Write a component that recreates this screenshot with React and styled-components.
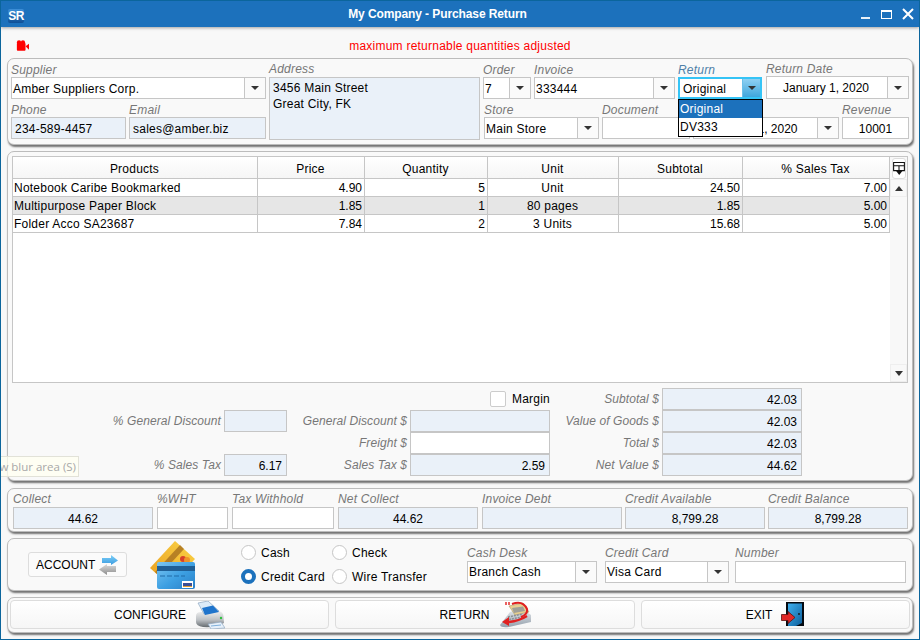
import React from "react";
import styled, { createGlobalStyle } from "styled-components";

const GlobalStyle = createGlobalStyle`
  html, body {
    margin: 0;
    padding: 0;
    background: #f8f8f8;
  }
  * {
    box-sizing: border-box;
  }
`;

const Window = styled.div`
  position: relative;
  width: 920px;
  height: 640px;
  overflow: hidden;
  display: flex;
  flex-direction: column;
  border: 1px solid #0b659c;
  background: #f8f8f8;
  font-family: "Liberation Sans", Arial, sans-serif;
  font-size: 12px;
  letter-spacing: 0.23px;
  color: #000;
`;

const TitleBar = styled.div`
  flex: none;
  height: 26px;
  display: flex;
  align-items: center;
  background: #1c71bc;
  box-shadow: 0 1px 3px rgba(0, 0, 0, 0.35);
  z-index: 1;
`;

const Logo = styled.div`
  flex: none;
  width: 16px;
  height: 14px;
  margin: 3px 6px 0 7px;
  border-radius: 2px;
  background: linear-gradient(#3d8fd8, #0f4f96);
  color: #fff;
  font-size: 12px;
  font-weight: bold;
  line-height: 14px;
  letter-spacing: -0.5px;
  text-align: center;
`;

const Title = styled.div`
  flex: 1;
  color: #fff;
  font-size: 12px;
  font-weight: bold;
  letter-spacing: -0.1px;
  text-align: center;
`;

const Controls = styled.div`
  flex: none;
  width: 74px;
  height: 26px;
  display: flex;
  align-items: flex-start;
  svg {
    display: block;
  }
`;

const MessageRow = styled.div`
  flex: none;
  height: 31px;
  position: relative;
  display: flex;
  align-items: center;
  justify-content: center;
  padding-top: 6px;
  color: #ff0000;
  font-size: 12px;
`;

const CameraSlot = styled.div`
  position: absolute;
  left: 15px;
  top: 13px;
  svg {
    display: block;
  }
`;

const Panels = styled.div`
  flex: 1;
  display: flex;
  flex-direction: column;
  padding: 0 6px;
`;

const Panel = styled.div`
  flex: none;
  height: ${(p) => p.$h}px;
  margin-bottom: ${(p) => p.$mb}px;
  border: 1px solid #bcbcbc;
  border-radius: 7px;
  background: #f9f9f9;
  box-shadow: 1px 2px 2px rgba(0, 0, 0, 0.55);
`;

const HeaderPanel = styled(Panel)`
  display: flex;
  gap: 3px;
  padding: 0 3px;
`;

const Column = styled.div`
  flex: none;
  width: ${(p) => p.$w}px;
  display: flex;
  flex-direction: column;
`;

const FormRow = styled.div`
  display: flex;
  gap: 3px;
  margin-left: ${(p) => p.$ml || 0}px;
`;

const Field = styled.div`
  flex: none;
  position: relative;
  width: ${(p) => p.$w}px;
  margin-left: ${(p) => p.$ml || 0}px;
  display: flex;
  flex-direction: column;
`;

const Label = styled.div`
  height: ${(p) => p.$h || 18}px;
  padding-top: ${(p) => p.$pt || 4}px;
  line-height: 14px;
  font-style: italic;
  letter-spacing: 0.2px;
  white-space: nowrap;
  color: ${(p) => (p.$active ? "#4e80a8" : "#777")};
`;

const Box = styled.div`
  height: 22px;
  display: flex;
  align-items: center;
  justify-content: ${(p) => (p.$center ? "center" : "flex-start")};
  padding: 1px 3px 0;
  border: 1px solid #c6c6c6;
  background: ${(p) => (p.$white ? "#fff" : "#eaf1f9")};
  letter-spacing: ${(p) => (p.$center ? 0 : "inherit")};
  white-space: nowrap;
`;

const AddressBox = styled.div`
  height: 63px;
  padding: 2px 3px;
  border: 1px solid #c6c6c6;
  background: #eaf1f9;
  line-height: 16px;
`;

const ComboBox = styled.div`
  height: ${(p) => (p.$tallBox ? 23 : 22)}px;
  display: flex;
  border: ${(p) => (p.$focus ? "2px solid #35c4f6" : "1px solid #c6c6c6")};
  background: #fff;
`;

const ComboText = styled.div`
  flex: 1;
  min-width: 0;
  display: flex;
  align-items: center;
  justify-content: ${(p) => (p.$center ? "center" : "flex-start")};
  padding: 1px ${(p) => (p.$center ? 3 : 0)}px 0 ${(p) => (p.$focus ? 3 : 1)}px;
  letter-spacing: ${(p) => (p.$center ? 0 : "inherit")};
  white-space: nowrap;
`;

const ComboButton = styled.div`
  flex: none;
  width: ${(p) => (p.$focus ? 18 : 21)}px;
  display: flex;
  align-items: center;
  justify-content: center;
  border-left: 1px solid ${(p) => (p.$focus ? "#6cc0ea" : "#c6c6c6")};
  background: ${(p) => (p.$focus ? "linear-gradient(#8fd0f2, #3fa6dc)" : "#fafafa")};
  &::after {
    content: "";
    border-left: 4px solid transparent;
    border-right: 4px solid transparent;
    border-top: 4px solid #333;
  }
`;

const Popup = styled.div`
  position: absolute;
  left: 0;
  top: 40px;
  width: 85px;
  height: 38px;
  z-index: 3;
  border: 1px solid #000;
  background: #fff;
`;

const PopupItem = styled.div`
  height: 18px;
  padding-left: 1px;
  line-height: 19px;
  background: ${(p) => (p.$selected ? "#1c71bc" : "#fff")};
  color: ${(p) => (p.$selected ? "#fff" : "#000")};
`;

const ItemsPanel = styled(Panel)`
  padding: 4px 4px 0;
`;

const TableBox = styled.div`
  width: 896px;
  height: 227px;
  display: flex;
  border: 1px solid #c6c6c6;
  background: #fff;
`;

const Table = styled.div`
  flex: none;
  width: 877px;
`;

const TableRow = styled.div`
  display: grid;
  grid-template-columns: 245px 107px 123px 131px 124px 147px;
  height: ${(p) => (p.$header ? 22 : 18)}px;
  background: ${(p) =>
    p.$header ? "linear-gradient(#fff, #f5f5f5)" : p.$shaded ? "#e6e6e6" : "#fff"};
`;

const Cell = styled.div`
  display: flex;
  align-items: center;
  justify-content: ${(p) =>
    p.$align === "right" ? "flex-end" : p.$align === "center" ? "center" : "flex-start"};
  padding: 0 2px 0 1px;
  border-right: 1px solid #c6c6c6;
  border-bottom: 1px solid #c6c6c6;
  letter-spacing: ${(p) => (p.$align === "right" ? 0 : "inherit")};
  white-space: nowrap;
`;

const HeaderCell = styled(Cell)`
  padding-top: 2px;
`;

const ScrollBar = styled.div`
  flex: 1;
  display: flex;
  flex-direction: column;
  background: #f8f8f8;
`;

const ScrollButton = styled.div`
  flex: none;
  height: ${(p) => p.$h}px;
  display: flex;
  align-items: center;
  justify-content: center;
  border: 1px solid #eee;
  background: #f8f8f8;
  &::after {
    content: "";
    display: block;
    border-left: 4px solid transparent;
    border-right: 4px solid transparent;
    border-${(p) => (p.$dir === "up" ? "bottom" : "top")}: 5px solid #333;
  }
`;

const ColumnsButton = styled.div`
  flex: none;
  height: 21px;
  margin: 1px 0 0 2px;
  width: 14px;
  display: flex;
  align-items: center;
  justify-content: center;
  border: 1px solid #ddd;
  border-radius: 3px;
  background: #fff;
`;

const ScrollTrack = styled.div`
  flex: 1;
`;

const Totals = styled.div`
  display: grid;
  grid-template-columns: 212px 63px 123px 140px 112px 140px;
  grid-auto-rows: 21px;
  row-gap: 1px;
  margin-top: 5px;
`;

const TotalLabel = styled.div`
  display: flex;
  align-items: center;
  justify-content: flex-end;
  padding: 1px 3px 0 0;
  font-style: italic;
  letter-spacing: 0.08px;
  color: #777;
  white-space: nowrap;
`;

const TotalValue = styled.div`
  display: flex;
  align-items: center;
  justify-content: flex-end;
  padding: 1px 4px 0 0;
  border: 1px solid #c6c6c6;
  height: 22px;
  letter-spacing: 0;
  background: ${(p) => (p.$white ? "#fff" : "#eaf1f9")};
`;

const Spacer = styled.div`
  grid-column: span 2;
`;

const MarginCell = styled.div`
  grid-column: span 2;
  display: flex;
  align-items: center;
  justify-content: flex-end;
  gap: 6px;
  padding-top: 1px;
`;

const CheckBox = styled.div`
  width: 16px;
  height: 16px;
  border: 1px solid #ccc;
  border-radius: 2px;
  background: #fff;
`;

const CollectPanel = styled(Panel)`
  display: flex;
  padding: 0 5px;
`;

const CollectField = styled(Field)`
  margin-right: ${(p) => p.$mr}px;
`;

const PaymentPanel = styled(Panel)`
  display: flex;
  align-items: center;
  padding-left: 20px;
`;

const AccountButton = styled.div`
  flex: none;
  width: 99px;
  height: 25px;
  display: flex;
  align-items: center;
  gap: 4px;
  padding-left: 7px;
  border: 1px solid #ddd;
  border-radius: 3px;
  background: #fbfbfb;
  letter-spacing: 0;
`;

const CardSlot = styled.div`
  flex: none;
  width: 45px;
  height: 48px;
  margin: 0 46px 0 23px;
  svg {
    display: block;
  }
`;

const RadioGrid = styled.div`
  flex: none;
  width: 226px;
  display: grid;
  grid-template-columns: 91px 1fr;
  grid-auto-rows: 24px;
`;

const RadioItem = styled.div`
  display: flex;
  align-items: center;
  gap: 5px;
  white-space: nowrap;
`;

const RadioDot = styled.div`
  flex: none;
  width: 15px;
  height: 15px;
  border-radius: 50%;
  border: ${(p) => (p.$on ? "4px solid #1c71bc" : "1px solid #c6c6c6")};
  background: #fff;
`;

const PaymentFields = styled.div`
  display: flex;
  margin-top: -4px;
`;

const PaymentField = styled(Field)`
  margin-right: ${(p) => p.$mr}px;
`;

const ButtonPanel = styled(Panel)`
  display: flex;
  gap: 6px;
  padding: 2px 0 0 2px;
`;

const ActionButton = styled.div`
  flex: none;
  width: ${(p) => p.$w}px;
  height: 29px;
  display: flex;
  align-items: center;
  justify-content: center;
  gap: 9px;
  border: 1px solid #ddd;
  border-radius: 4px;
  background: linear-gradient(#fff, #f6f6f6);
  letter-spacing: 0;
  svg {
    display: block;
  }
`;

const BlurTip = styled.div`
  position: absolute;
  left: -40px;
  top: 455px;
  width: 118px;
  height: 21px;
  padding-right: 2px;
  border: 1px solid #e2e2d8;
  background: rgba(255, 255, 240, 0.75);
  color: #a8a8a8;
  font-family: "Open Sans", sans-serif;
  font-size: 11.5px;
  letter-spacing: 0;
  line-height: 19px;
  text-align: right;
  white-space: nowrap;
  z-index: 4;
`;

const CameraIcon = () => (
  <svg width="13" height="11" viewBox="0 0 15 12">
    <circle cx="3.5" cy="2.5" r="2.5" fill="#f00" />
    <circle cx="8" cy="2.5" r="2.5" fill="#f00" />
    <rect x="1" y="3" width="10" height="9" rx="1" fill="#f00" />
    <path d="M11 7 L15 4 V11 Z" fill="#f00" />
  </svg>
);

const WindowIcons = () => (
  <svg width="74" height="26" viewBox="0 0 74 26">
    <rect x="16" y="16" width="9" height="2" fill="#fff" opacity="0.9" />
    <rect x="36.5" y="9.5" width="10" height="8" fill="none" stroke="#fff" strokeWidth="1" />
    <rect x="36" y="9" width="11" height="2" fill="#fff" />
    <path d="M58 8 L68 18 M68 8 L58 18" stroke="#fff" strokeWidth="2" />
  </svg>
);

const ColumnsIcon = () => (
  <svg width="12" height="14" viewBox="0 0 11 13">
    <path d="M0.5 0.5 H10.5 V8 H0.5 Z M0.5 3.5 H10.5 M5.5 3.5 V8" fill="#fff" stroke="#111" />
    <path d="M2.5 8 H9 L5.7 12 Z" fill="#111" />
  </svg>
);

const ArrowsIcon = () => (
  <svg width="20" height="20" viewBox="0 0 20 20">
    <defs>
      <linearGradient id="arrowBlue" x1="0" y1="0" x2="0" y2="1">
        <stop offset="0" stopColor="#7fd0f8" />
        <stop offset="1" stopColor="#3a9be0" />
      </linearGradient>
      <linearGradient id="arrowGrey" x1="0" y1="0" x2="0" y2="1">
        <stop offset="0" stopColor="#dcdcdc" />
        <stop offset="1" stopColor="#8c8c8c" />
      </linearGradient>
    </defs>
    <path d="M3 3 H12 V0 L19 5.5 L12 10 V8 H3 Z" fill="url(#arrowBlue)" />
    <path d="M17 11 H8 V9 L0 14.5 L8 20 V17 H17 Z" fill="url(#arrowGrey)" />
  </svg>
);

const CardsIcon = () => (
  <svg width="45" height="48" viewBox="0 0 45 48">
    <defs>
      <linearGradient id="cardGold" x1="0" y1="1" x2="1" y2="0">
        <stop offset="0" stopColor="#e89b1c" />
        <stop offset="1" stopColor="#fbd448" />
      </linearGradient>
      <linearGradient id="cardBlue" x1="0" y1="0" x2="1" y2="1">
        <stop offset="0" stopColor="#7cc6f2" />
        <stop offset="0.55" stopColor="#3c9fe2" />
        <stop offset="1" stopColor="#2a7fc6" />
      </linearGradient>
    </defs>
    <path d="M0 27 L25 0 L45 18 L20 45 Z" fill="url(#cardGold)" />
    <path d="M5 31 L30 4 L34 8 L9 35 Z" fill="#a8701f" opacity="0.8" />
    <circle cx="33" cy="18" r="3" fill="#d8402a" />
    <circle cx="37" cy="19" r="3" fill="#f0922a" />
    <rect x="7" y="21" width="38" height="27" rx="2" fill="url(#cardBlue)" />
    <rect x="7" y="25" width="38" height="5" fill="#1f5f96" />
    <path d="M10 35 H35" stroke="#1f6aa8" strokeDasharray="5 2" />
    <rect x="32" y="40" width="11" height="7" fill="#fff" />
    <rect x="33" y="42" width="9" height="3" fill="#3a4f96" />
    <rect x="33" y="45" width="9" height="1" fill="#e0a030" />
  </svg>
);

const PrinterIcon = () => (
  <svg width="30" height="28" viewBox="0 0 30 28">
    <defs>
      <linearGradient id="printerBody" x1="0" y1="0" x2="0" y2="1">
        <stop offset="0" stopColor="#f0f0f0" />
        <stop offset="0.55" stopColor="#bcc0c4" />
        <stop offset="1" stopColor="#666c70" />
      </linearGradient>
    </defs>
    <path d="M1 15 Q1 11 6 11 L24 10 Q28 11 28.5 15 L29 22 Q20 27 8 26 Q1 25 1 21 Z" fill="url(#printerBody)" />
    <path d="M3 2 L13 0 L24 10 L9 13 Z" fill="#dcebf8" stroke="#8fa8c0" strokeWidth="0.7" />
    <path d="M7 7 L18 4.5 L24 11 L10 14 Z" fill="#1f74cc" />
    <circle cx="26" cy="17" r="1.2" fill="#2fbf3f" />
    <path d="M13 23 L26 21 L30 27 L16 28 Z" fill="#e6f0fa" stroke="#8fa8c0" strokeWidth="0.7" />
    <path d="M16 25 L26 24" stroke="#7fb0dc" />
  </svg>
);

const RegisterIcon = () => (
  <svg width="32" height="29" viewBox="0 0 32 29">
    <defs>
      <linearGradient id="registerBody" x1="0" y1="0" x2="0" y2="1">
        <stop offset="0" stopColor="#eceff2" />
        <stop offset="1" stopColor="#94a0ac" />
      </linearGradient>
    </defs>
    <path d="M1 25 L11 12 L22 8 L32 15 L32 22 L10 27 Q2 28 1 25 Z" fill="url(#registerBody)" />
    <path d="M10 6 L24 3 L30 12 L16 15 Z" fill="#e8d090" stroke="#a89868" strokeWidth="0.6" />
    <path d="M13 8 L24 6.5 L26 11 L15 13 Z" fill="#a0a098" />
    <path d="M9 17 L24 14 M7 20 L23 17" stroke="#8a8f94" strokeWidth="1.5" strokeDasharray="2 1" />
    <path d="M7 2 V5 M10 2 V5" stroke="#e02020" strokeWidth="1.4" />
    <path d="M13 4 Q24 0 28 9 Q29 14 22 17" fill="none" stroke="#e02020" strokeWidth="2" />
    <path d="M28 16 Q20 21 10 22" fill="none" stroke="#e02020" strokeWidth="2.4" />
    <path d="M10 17 L3 22 L10 26 Z" fill="#e02020" />
  </svg>
);

const DoorIcon = () => (
  <svg width="24" height="25" viewBox="0 0 24 25">
    <defs>
      <linearGradient id="doorBlue" x1="0" y1="0" x2="1" y2="1">
        <stop offset="0" stopColor="#3fb0ee" />
        <stop offset="1" stopColor="#0e5f9c" />
      </linearGradient>
    </defs>
    <rect x="5" y="0" width="18" height="24" fill="#050a10" />
    <path d="M7 1.5 H21 V21 L15 24 H7 Z" fill="url(#doorBlue)" />
    <circle cx="18" cy="12" r="0.9" fill="#111" />
    <path d="M0.5 12.5 H7 V9.5 L14 15.5 L7 21.5 V18.5 H0.5 Z" fill="#e02828" stroke="#5a1010" strokeWidth="0.8" />
  </svg>
);

const Combo = ({ value, center, focus, tallBox }) => (
  <ComboBox $focus={focus} $tallBox={tallBox}>
    <ComboText $center={center} $focus={focus}>
      {value}
    </ComboText>
    <ComboButton $focus={focus} />
  </ComboBox>
);

const products = [
  { name: "Notebook Caribe Bookmarked", price: "4.90", qty: "5", unit: "Unit", sub: "24.50", tax: "7.00" },
  { name: "Multipurpose Paper Block", price: "1.85", qty: "1", unit: "80 pages", sub: "1.85", tax: "5.00" },
  { name: "Folder Acco SA23687", price: "7.84", qty: "2", unit: "3 Units", sub: "15.68", tax: "5.00" },
];

const collect = [
  { label: "Collect", w: 140, mr: 4, value: "44.62" },
  { label: "%WHT", w: 71, mr: 4, white: true },
  { label: "Tax Withhold", w: 102, mr: 4, white: true },
  { label: "Net Collect", w: 140, mr: 4, value: "44.62" },
  { label: "Invoice Debt", w: 140, mr: 3 },
  { label: "Credit Available", w: 140, mr: 3, value: "8,799.28" },
  { label: "Credit Balance", w: 140, mr: 0, value: "8,799.28" },
];

const App = () => {
  return (
    <Window>
      <GlobalStyle />
      <TitleBar>
        <Logo>SR</Logo>
        <Title>My Company - Purchase Return</Title>
        <Controls>
          <WindowIcons />
        </Controls>
      </TitleBar>

      <MessageRow>
        <CameraSlot>
          <CameraIcon />
        </CameraSlot>
        maximum returnable quantities adjusted
      </MessageRow>

      <Panels>
        <HeaderPanel $h={87} $mb={6}>
          <Column $w={255}>
            <Field $w={255}>
              <Label>Supplier</Label>
              <Combo value="Amber Suppliers Corp." />
            </Field>
            <FormRow>
              <Field $w={115}>
                <Label>Phone</Label>
                <Box>234-589-4457</Box>
              </Field>
              <Field $w={137}>
                <Label>Email</Label>
                <Box>sales@amber.biz</Box>
              </Field>
            </FormRow>
          </Column>

          <Field $w={211}>
            <Label $pt={3}>Address</Label>
            <AddressBox>
              3456 Main Street
              <br />
              Great City, FK
            </AddressBox>
          </Field>

          <Column $w={426}>
            <FormRow>
              <Field $w={48}>
                <Label>Order</Label>
                <Combo value="7" />
              </Field>
              <Field $w={141}>
                <Label>Invoice</Label>
                <Combo value="333444" />
              </Field>
              <Field $w={84}>
                <Label $active>Return</Label>
                <Combo value="Original" focus />
                <Popup>
                  <PopupItem $selected>Original</PopupItem>
                  <PopupItem>DV333</PopupItem>
                </Popup>
              </Field>
              <Field $w={143} $ml={1}>
                <Label $h={17} $pt={3}>
                  Return Date
                </Label>
                <Combo value="January 1, 2020" center tallBox />
              </Field>
            </FormRow>
            <FormRow $ml={1}>
              <Field $w={115}>
                <Label>Store</Label>
                <Combo value="Main Store" />
              </Field>
              <Field $w={88}>
                <Label>Document</Label>
                <Box $white />
              </Field>
              <Field $w={146}>
                <Label>Date</Label>
                <Combo value="January 1, 2020" center />
              </Field>
              <Field $w={67}>
                <Label>Revenue</Label>
                <Box $white $center>
                  10001
                </Box>
              </Field>
            </FormRow>
          </Column>
        </HeaderPanel>

        <ItemsPanel $h={330} $mb={7}>
          <TableBox>
            <Table>
              <TableRow $header>
                <HeaderCell $align="center">Products</HeaderCell>
                <HeaderCell $align="center">Price</HeaderCell>
                <HeaderCell $align="center">Quantity</HeaderCell>
                <HeaderCell $align="center">Unit</HeaderCell>
                <HeaderCell $align="center">Subtotal</HeaderCell>
                <HeaderCell $align="center">% Sales Tax</HeaderCell>
              </TableRow>
              {products.map((row, index) => (
                <TableRow key={row.name} $shaded={index === 1}>
                  <Cell>{row.name}</Cell>
                  <Cell $align="right">{row.price}</Cell>
                  <Cell $align="right">{row.qty}</Cell>
                  <Cell $align="center">{row.unit}</Cell>
                  <Cell $align="right">{row.sub}</Cell>
                  <Cell $align="right">{row.tax}</Cell>
                </TableRow>
              ))}
            </Table>
            <ScrollBar>
              <ColumnsButton>
                <ColumnsIcon />
              </ColumnsButton>
              <ScrollButton $h={18} $dir="up" />
              <ScrollTrack />
              <ScrollButton $h={18} $dir="down" />
            </ScrollBar>
          </TableBox>

          <Totals>
            <Spacer />
            <MarginCell>
              <CheckBox />
              Margin
            </MarginCell>
            <TotalLabel>Subtotal $</TotalLabel>
            <TotalValue>42.03</TotalValue>

            <TotalLabel>% General Discount</TotalLabel>
            <TotalValue />
            <TotalLabel>General Discount $</TotalLabel>
            <TotalValue />
            <TotalLabel>Value of Goods $</TotalLabel>
            <TotalValue>42.03</TotalValue>

            <Spacer />
            <TotalLabel>Freight $</TotalLabel>
            <TotalValue $white />
            <TotalLabel>Total $</TotalLabel>
            <TotalValue>42.03</TotalValue>

            <TotalLabel>% Sales Tax</TotalLabel>
            <TotalValue>6.17</TotalValue>
            <TotalLabel>Sales Tax $</TotalLabel>
            <TotalValue>2.59</TotalValue>
            <TotalLabel>Net Value $</TotalLabel>
            <TotalValue>44.62</TotalValue>
          </Totals>
        </ItemsPanel>

        <CollectPanel $h={44} $mb={6}>
          {collect.map((item) => (
            <CollectField key={item.label} $w={item.w} $mr={item.mr}>
              <Label $pt={3}>{item.label}</Label>
              <Box $white={item.white} $center>
                {item.value}
              </Box>
            </CollectField>
          ))}
        </CollectPanel>

        <PaymentPanel $h={53} $mb={6}>
          <AccountButton>
            ACCOUNT
            <ArrowsIcon />
          </AccountButton>
          <CardSlot>
            <CardsIcon />
          </CardSlot>
          <RadioGrid>
            <RadioItem>
              <RadioDot />
              Cash
            </RadioItem>
            <RadioItem>
              <RadioDot />
              Check
            </RadioItem>
            <RadioItem>
              <RadioDot $on />
              Credit Card
            </RadioItem>
            <RadioItem>
              <RadioDot />
              Wire Transfer
            </RadioItem>
          </RadioGrid>
          <PaymentFields>
            <PaymentField $w={130} $mr={8}>
              <Label $pt={3}>Cash Desk</Label>
              <Combo value="Branch Cash" />
            </PaymentField>
            <PaymentField $w={124} $mr={6}>
              <Label $pt={3}>Credit Card</Label>
              <Combo value="Visa Card" />
            </PaymentField>
            <PaymentField $w={171} $mr={0}>
              <Label $pt={3}>Number</Label>
              <Box $white />
            </PaymentField>
          </PaymentFields>
        </PaymentPanel>

        <ButtonPanel $h={36} $mb={0}>
          <ActionButton $w={319}>
            CONFIGURE
            <PrinterIcon />
          </ActionButton>
          <ActionButton $w={300}>
            RETURN
            <RegisterIcon />
          </ActionButton>
          <ActionButton $w={269}>
            EXIT
            <DoorIcon />
          </ActionButton>
        </ButtonPanel>
      </Panels>

      <BlurTip>Show blur area (S)</BlurTip>
    </Window>
  );
};

export default App;
